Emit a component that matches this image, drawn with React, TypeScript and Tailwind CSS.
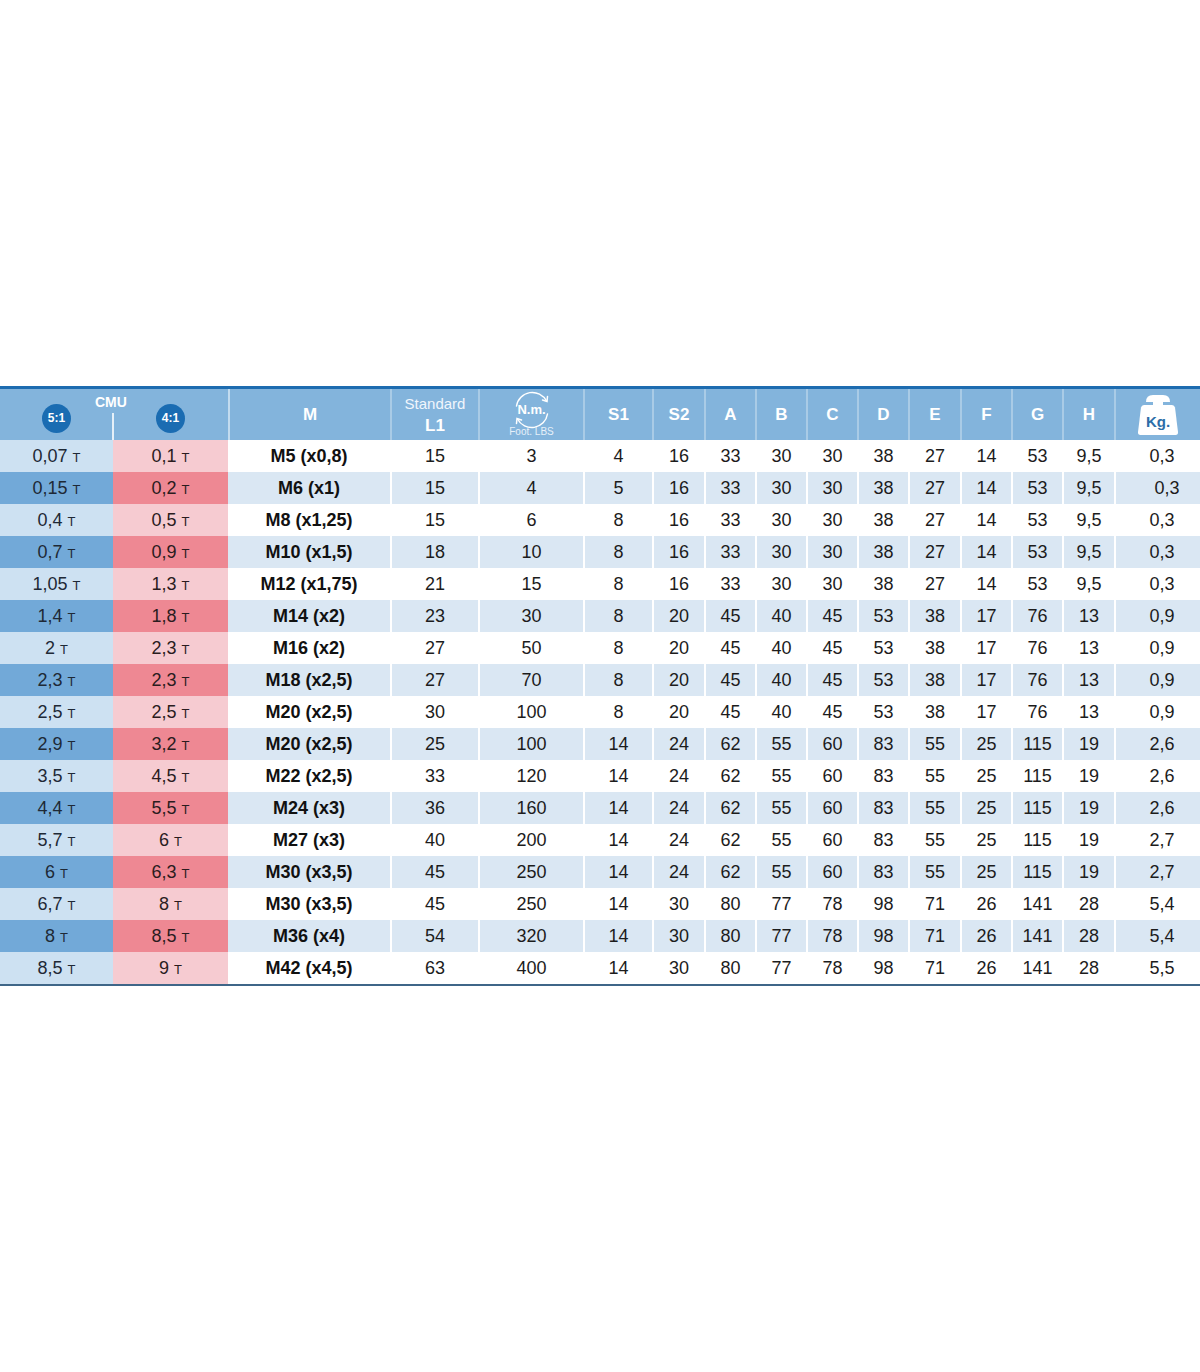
import React from 'react'

const rows: string[][] = [
  ['0,07', '0,1', 'M5 (x0,8)', '15', '3', '4', '16', '33', '30', '30', '38', '27', '14', '53', '9,5', '0,3'],
  ['0,15', '0,2', 'M6 (x1)', '15', '4', '5', '16', '33', '30', '30', '38', '27', '14', '53', '9,5', '0,3'],
  ['0,4', '0,5', 'M8 (x1,25)', '15', '6', '8', '16', '33', '30', '30', '38', '27', '14', '53', '9,5', '0,3'],
  ['0,7', '0,9', 'M10 (x1,5)', '18', '10', '8', '16', '33', '30', '30', '38', '27', '14', '53', '9,5', '0,3'],
  ['1,05', '1,3', 'M12 (x1,75)', '21', '15', '8', '16', '33', '30', '30', '38', '27', '14', '53', '9,5', '0,3'],
  ['1,4', '1,8', 'M14 (x2)', '23', '30', '8', '20', '45', '40', '45', '53', '38', '17', '76', '13', '0,9'],
  ['2', '2,3', 'M16 (x2)', '27', '50', '8', '20', '45', '40', '45', '53', '38', '17', '76', '13', '0,9'],
  ['2,3', '2,3', 'M18 (x2,5)', '27', '70', '8', '20', '45', '40', '45', '53', '38', '17', '76', '13', '0,9'],
  ['2,5', '2,5', 'M20 (x2,5)', '30', '100', '8', '20', '45', '40', '45', '53', '38', '17', '76', '13', '0,9'],
  ['2,9', '3,2', 'M20 (x2,5)', '25', '100', '14', '24', '62', '55', '60', '83', '55', '25', '115', '19', '2,6'],
  ['3,5', '4,5', 'M22 (x2,5)', '33', '120', '14', '24', '62', '55', '60', '83', '55', '25', '115', '19', '2,6'],
  ['4,4', '5,5', 'M24 (x3)', '36', '160', '14', '24', '62', '55', '60', '83', '55', '25', '115', '19', '2,6'],
  ['5,7', '6', 'M27 (x3)', '40', '200', '14', '24', '62', '55', '60', '83', '55', '25', '115', '19', '2,7'],
  ['6', '6,3', 'M30 (x3,5)', '45', '250', '14', '24', '62', '55', '60', '83', '55', '25', '115', '19', '2,7'],
  ['6,7', '8', 'M30 (x3,5)', '45', '250', '14', '30', '80', '77', '78', '98', '71', '26', '141', '28', '5,4'],
  ['8', '8,5', 'M36 (x4)', '54', '320', '14', '30', '80', '77', '78', '98', '71', '26', '141', '28', '5,4'],
  ['8,5', '9', 'M42 (x4,5)', '63', '400', '14', '30', '80', '77', '78', '98', '71', '26', '141', '28', '5,5'],
]

const grid = 'grid grid-cols-[113px_115px_162px_88px_105px_69px_52px_51px_51px_51px_51px_52px_51px_51px_52px_86px]'

function Badge({ label }: { label: string }) {
  return (
    <div className="w-[29px] h-[29px] rounded-full bg-[#1a6cb2] flex items-center justify-center text-white text-[12px] font-bold">
      {label}
    </div>
  )
}

// round arrows around N.m.
function TorqueIcon() {
  return (
    <div className="relative w-full h-full">
      <svg
        width="40"
        height="40"
        viewBox="0 0 40 40"
        className="absolute top-[1px] left-1/2 -translate-x-1/2"
        fill="none"
        stroke="white"
        strokeWidth="1.5"
        strokeLinecap="round"
      >
        <path d="M4.5 16 A16 16 0 0 1 34.5 11" />
        <path d="M30.5 10 L35 11.5 L35.5 6.5" />
        <path d="M35.5 24 A16 16 0 0 1 5.5 29" />
        <path d="M9.5 30 L5 28.5 L4.5 33.5" />
      </svg>
      <span className="absolute inset-x-0 top-[14px] text-center text-[13px] leading-none font-bold text-white">N.m.</span>
      <span className="absolute inset-x-0 top-[38px] text-center text-[10px] leading-none font-normal text-[#e6f0f9]">Foot. LBS</span>
    </div>
  )
}

function WeightIcon() {
  return (
    <div className="relative w-[42px] h-[42px]">
      <svg width="42" height="42" viewBox="0 0 42 42" className="absolute inset-0">
        <path d="M9 8 Q9 1 16 1 L26 1 Q33 1 33 8 Z" fill="white" />
        <rect x="16" y="7" width="10" height="5" fill="white" />
        <path d="M7 11 L35 11 Q37.5 11 38 13.5 L41 38 Q41.3 41 38.5 41 L3.5 41 Q0.7 41 1 38 L4 13.5 Q4.5 11 7 11 Z" fill="white" />
      </svg>
      <span className="absolute inset-x-0 top-[20px] text-center text-[15px] leading-none font-bold text-[#2c6ea8]">Kg.</span>
    </div>
  )
}

export default function App() {
  const headCell = 'flex items-center justify-center border-l-2 border-[#a9cbe6] text-white font-bold text-[17px]'
  return (
    <div className="min-h-screen flex items-center bg-white font-['Liberation_Sans',Arial,sans-serif]">
      <div className="w-[1200px] border-t-[3px] border-[#1d6cb0] border-b-2 border-b-[#3f6688]">
        {/* header */}
        <div className={`${grid} h-[51px] bg-[#83b4dc]`}>
          <div className="relative col-span-2 grid grid-cols-[113px_115px]">
            <div className="flex items-center justify-center pt-[7px]">
              <Badge label="5:1" />
            </div>
            <div className="flex items-center justify-center pt-[7px]">
              <Badge label="4:1" />
            </div>
            <span className="absolute left-[95px] top-[3px] text-[14px] font-bold text-white">CMU</span>
            <div className="absolute left-[112px] top-[24px] bottom-0 w-[2px] bg-white/80" />
          </div>
          <div className={`${headCell} border-[#c2dbef]`}>M</div>
          <div className={`${headCell} flex-col leading-none`}>
            <span className="font-normal text-[15px] text-[#f0f6fc]">Standard</span>
            <span className="mt-[6px]">L1</span>
          </div>
          <div className={headCell}>
            <TorqueIcon />
          </div>
          <div className={headCell}>S1</div>
          <div className={headCell}>S2</div>
          <div className={headCell}>A</div>
          <div className={headCell}>B</div>
          <div className={headCell}>C</div>
          <div className={headCell}>D</div>
          <div className={headCell}>E</div>
          <div className={headCell}>F</div>
          <div className={headCell}>G</div>
          <div className={headCell}>H</div>
          <div className={headCell}>
            <WeightIcon />
          </div>
        </div>

        {/* body */}
        {rows.map((r, i) => {
          const alt = i % 2 === 1
          return (
            <div key={i} className={`${grid} h-[32px] text-[18px] text-[#1c1c1c]`}>
              <div className={`flex items-center justify-center gap-[5px] text-[#1e2936] ${alt ? 'bg-[#72a9d8]' : 'bg-[#cde1f2]'}`}>
                {r[0]}
                <span className="text-[13px] mt-[3px]">T</span>
              </div>
              <div className={`flex items-center justify-center gap-[5px] text-[#2a1c1e] ${alt ? 'bg-[#ee8893]' : 'bg-[#f6cbd1]'}`}>
                {r[1]}
                <span className="text-[13px] mt-[3px]">T</span>
              </div>
              {r.slice(2).map((v, j) => (
                <div
                  key={j}
                  className={`flex items-center justify-center ${j === 0 ? 'font-bold text-[#111]' : 'border-l-2 border-white'} ${j === 13 ? (i === 1 ? 'pl-[18px]' : 'pl-[8px]') : ''} ${alt ? 'bg-[#dae7f3]' : 'bg-white'}`}
                >
                  {v}
                </div>
              ))}
            </div>
          )
        })}
      </div>
    </div>
  )
}
